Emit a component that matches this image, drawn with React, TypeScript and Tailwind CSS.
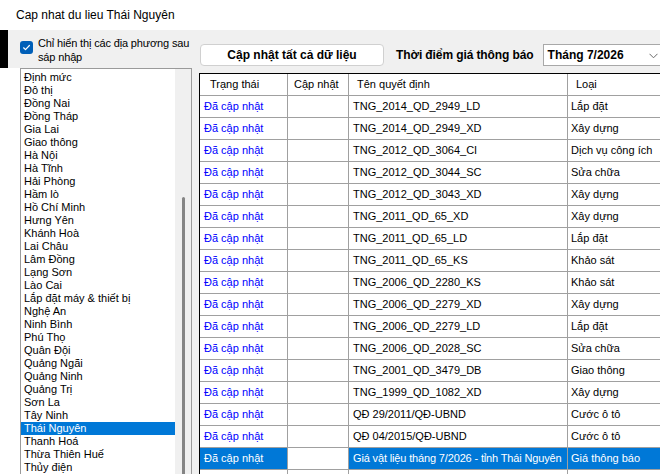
import React from "react";

const PROVINCES = [
  "Định mức",
  "Đô thị",
  "Đồng Nai",
  "Đồng Tháp",
  "Gia Lai",
  "Giao thông",
  "Hà Nội",
  "Hà Tĩnh",
  "Hải Phòng",
  "Hầm lò",
  "Hồ Chí Minh",
  "Hưng Yên",
  "Khánh Hoà",
  "Lai Châu",
  "Lâm Đồng",
  "Lạng Sơn",
  "Lào Cai",
  "Lắp đặt máy & thiết bị",
  "Nghệ An",
  "Ninh Bình",
  "Phú Thọ",
  "Quân Đội",
  "Quảng Ngãi",
  "Quảng Ninh",
  "Quảng Trị",
  "Sơn La",
  "Tây Ninh",
  "Thái Nguyên",
  "Thanh Hoá",
  "Thừa Thiên Huế",
  "Thủy điện",
];

const ROWS: [string, string][] = [
  ["TNG_2014_QD_2949_LD", "Lắp đặt"],
  ["TNG_2014_QD_2949_XD", "Xây dựng"],
  ["TNG_2012_QD_3064_CI", "Dịch vụ công ích"],
  ["TNG_2012_QD_3044_SC", "Sửa chữa"],
  ["TNG_2012_QD_3043_XD", "Xây dựng"],
  ["TNG_2011_QD_65_XD", "Xây dựng"],
  ["TNG_2011_QD_65_LD", "Lắp đặt"],
  ["TNG_2011_QD_65_KS", "Khảo sát"],
  ["TNG_2006_QD_2280_KS", "Khảo sát"],
  ["TNG_2006_QD_2279_XD", "Xây dựng"],
  ["TNG_2006_QD_2279_LD", "Lắp đặt"],
  ["TNG_2006_QD_2028_SC", "Sửa chữa"],
  ["TNG_2001_QD_3479_DB", "Giao thông"],
  ["TNG_1999_QD_1082_XD", "Xây dựng"],
  ["QĐ 29/2011/QĐ-UBND", "Cước ô tô"],
  ["QĐ 04/2015/QĐ-UBND", "Cước ô tô"],
  ["Giá vật liệu tháng 7/2026 - tỉnh Thái Nguyên", "Giá thông báo"],
];

const SELECTED_ROW = 16;

function ProvinceList() {
  return (
    <div className="w-[172px] h-[420px] border border-[#9a9a9a] bg-white flex">
      <div className="flex-1 pt-[2px] text-[11px] leading-[13px] text-black">
        {PROVINCES.map((p) => (
          <div
            key={p}
            className={
              p === "Thái Nguyên"
                ? "h-[13px] pl-[3px] bg-[#0078d7] text-white whitespace-nowrap"
                : "h-[13px] pl-[3px] whitespace-nowrap"
            }
          >
            {p}
          </div>
        ))}
      </div>
      <div className="w-[16px] bg-[#f0f0f0] flex flex-col items-center pt-[128px]">
        <div className="w-[3px] h-[300px] rounded-full bg-[#858585]" />
      </div>
    </div>
  );
}

function DecisionGrid() {
  const cell = "h-[22px] border-r border-b border-[#a0a0a0] flex items-center whitespace-nowrap overflow-hidden";
  return (
    <div className="border-l border-t border-black bg-white w-[480px] text-[11px]">
      <div className="grid grid-cols-[88px_61px_219px_112px] text-black">
        <div className={cell + " pl-[10px]"}>Trạng thái</div>
        <div className={cell + " pl-[6px]"}>Cập nhật</div>
        <div className={cell + " pl-[8px]"}>Tên quyết định</div>
        <div className={cell + " pl-[8px]"}>Loại</div>
        {ROWS.map(([name, kind], i) => {
          const sel = i === SELECTED_ROW;
          return (
            <React.Fragment key={name}>
              <div className={cell + " pl-[4px] " + (sel ? "bg-[#0078d7] text-white" : "text-[#0000ff]")}>
                Đã cập nhật
              </div>
              <div className={cell} />
              <div className={cell + " pl-[4px] " + (sel ? "bg-[#0078d7] text-white tracking-[-0.15px]" : "")}>
                {name}
              </div>
              <div className={cell + " pl-[3px] " + (sel ? "bg-[#0078d7] text-white" : "")}>{kind}</div>
            </React.Fragment>
          );
        })}
        <div className={cell} />
        <div className={cell} />
        <div className={cell} />
        <div className={cell} />
      </div>
    </div>
  );
}

export default function App() {
  return (
    <div
      className="w-[660px] h-[474px] overflow-hidden bg-[#f0f0f0] flex flex-col text-black"
      style={{ fontFamily: '"Liberation Sans", Arial, sans-serif' }}
    >
      {/* Title bar */}
      <div className="h-[30px] shrink-0 bg-white flex items-center pl-[16px] text-[12px]">
        Cap nhat du lieu Thái Nguyên
      </div>

      <div className="flex-1 flex overflow-hidden">
        {/* outside strip */}
        <div className="w-[20px] shrink-0 flex flex-col">
          <div className="h-[38px] shrink-0">
            <div className="w-[8px] h-full bg-black" />
          </div>
          <div className="flex-1 bg-white" />
        </div>

        {/* left panel */}
        <div className="w-[172px] shrink-0 flex flex-col">
          <div className="h-[38px] shrink-0 flex items-start pt-[6px] gap-[5px]">
            <div className="mt-[5px] w-[13px] h-[13px] rounded-[3px] bg-[#005fb8] flex items-center justify-center shrink-0">
              <svg width="9" height="9" viewBox="0 0 9 9" fill="none">
                <path d="M1.6 4.8l1.9 1.8 3.9-4.1" stroke="white" strokeWidth="1.2" strokeLinecap="round" strokeLinejoin="round" />
              </svg>
            </div>
            <div className="text-[11px] leading-[14px] whitespace-nowrap tracking-[-0.15px]">
              Chỉ hiển thị các địa phương sau
              <br />
              sáp nhập
            </div>
          </div>
          <ProvinceList />
        </div>

        {/* right panel */}
        <div className="flex-1 flex flex-col pl-[7px] min-w-0">
          <div className="h-[43px] shrink-0 flex items-start pt-[14px]">
            <button className="ml-[1px] w-[184px] h-[22px] shrink-0 bg-white border border-[#d0d0d0] rounded-[4px] text-[12px] font-bold flex items-center justify-center">
              Cập nhật tất cả dữ liệu
            </button>
            <div className="ml-[12px] h-[22px] shrink-0 flex items-center text-[12px] font-bold whitespace-nowrap tracking-[-0.1px]">
              Thời điểm giá thông báo
            </div>
            <div className="ml-[9px] w-[125px] h-[22px] shrink-0 bg-white border border-[#a8a8a8] flex items-center pl-[4px] text-[12px] font-bold relative">
              Tháng 7/2026
              <svg className="absolute right-[9px] top-[8px]" width="9" height="6" viewBox="0 0 9 6" fill="none">
                <path d="M0.5 0.8l4 4 4-4" stroke="#6a6a6a" strokeWidth="1" />
              </svg>
            </div>
          </div>
          <DecisionGrid />
        </div>
      </div>
    </div>
  );
}
